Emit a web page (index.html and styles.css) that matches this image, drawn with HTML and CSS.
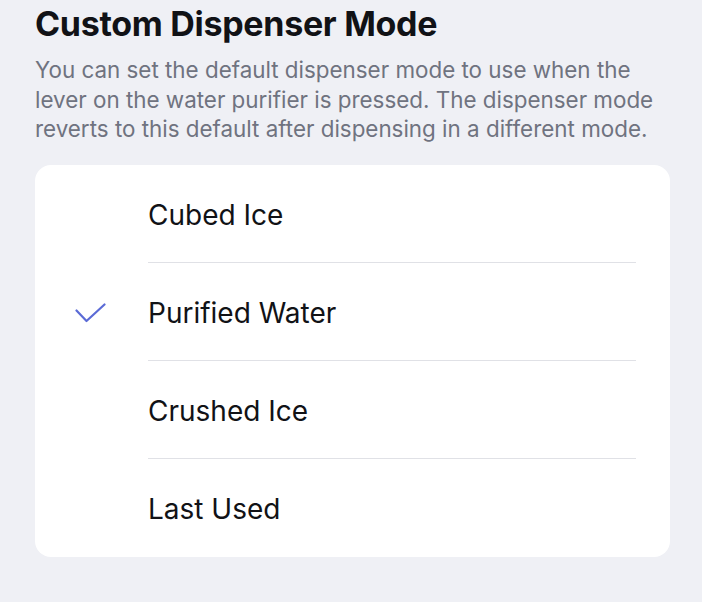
FILE: index.html
```html
<!DOCTYPE html>
<html lang="en">
<head>
    <meta charset="UTF-8">
    <title>Custom Dispenser Mode</title>
    <meta name="viewport" content="width=device-width, initial-scale=1">
    <link rel="stylesheet" href="styles.css">
</head>
<body>
<main class="page">
    <h1>Custom Dispenser Mode</h1>
    <p class="desc">You can set the default dispenser mode to use when the lever on the water purifier is pressed. The dispenser mode reverts to this default after dispensing in a different mode.</p>

    <!-- Mode options -->
    <ul class="options">
        <li class="option">
            <span class="check"></span>
            <span class="label">Cubed Ice</span>
        </li>
        <li class="option selected">
            <span class="check">
                <svg width="31" height="20" viewBox="0 0 31 20"><path d="M1.5 7.5 L11.5 18 L29.5 1.5" fill="none" stroke="#5b6bd6" stroke-width="2.2" stroke-linecap="round" stroke-linejoin="round"/></svg>
            </span>
            <span class="label">Purified Water</span>
        </li>
        <li class="option">
            <span class="check"></span>
            <span class="label">Crushed Ice</span>
        </li>
        <li class="option">
            <span class="check"></span>
            <span class="label">Last Used</span>
        </li>
    </ul>
</main>
</body>
</html>
```

FILE: styles.css
```css
body { margin: 0; padding: 0; background: #eff0f5; font-family: Inter, "Noto Sans", sans-serif; color: #111216;}
.page { padding: 3px 32px 40px 35px;}
h1 { margin: 0; font-size: 34px; line-height: 42px; font-weight: 700; letter-spacing: -0.3px;}
.desc { margin: 10px 0 21px; font-size: 22.4px; line-height: 29.5px; color: #6f7380;}
.options { list-style: none; margin: 0; padding: 0; background: #fff; border-radius: 16px;}
.option { display: flex; height: 98px;}
.check { width: 113px; display: flex; align-items: center; padding: 3px 0 0 40px; box-sizing: border-box;}
.label { flex: 1; display: flex; align-items: center; margin-right: 34px; padding-top: 3px; font-size: 28px; border-bottom: 1.5px solid #e0e1e6;}
.option:last-child .label { border-bottom: none;}
```
